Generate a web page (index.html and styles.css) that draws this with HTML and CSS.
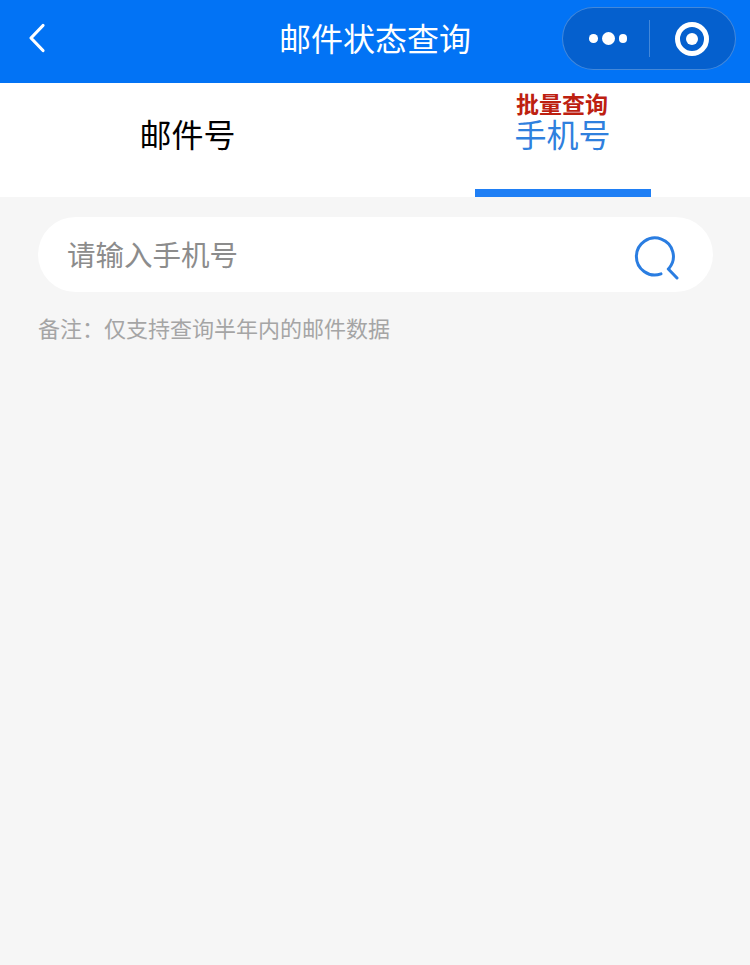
FILE: index.html
```html
<!DOCTYPE html>
<html lang="zh-CN">
<head>
  <meta charset="UTF-8">
  <meta name="viewport" content="width=device-width, initial-scale=1.0">
  <title>邮件状态查询</title>
  <link rel="stylesheet" href="styles.css">
</head>
<body>
  <header class="navbar">
    <button class="back-btn" aria-label="返回">
      <svg width="18" height="30" viewBox="0 0 18 30">
        <path d="M15 2.5 L3 15 L15 27.5" fill="none" stroke="#fff" stroke-width="3.2" stroke-linecap="round" stroke-linejoin="round"/>
      </svg>
    </button>
    <h1 class="nav-title">邮件状态查询</h1>
    <div class="capsule">
      <div class="capsule-more">
        <span class="dot"></span>
        <span class="dot dot-big"></span>
        <span class="dot"></span>
      </div>
      <div class="capsule-line"></div>
      <div class="capsule-close"><span class="ring"></span></div>
    </div>
  </header>

  <div class="tabs">
    <div class="tab">邮件号</div>
    <div class="tab tab-active">
      <span class="batch-label">批量查询</span>
      手机号
    </div>
  </div>

  <main class="content">
    <div class="search-box">
      <input class="search-input" type="text" placeholder="请输入手机号">
      <svg class="search-icon" width="46" height="46" viewBox="0 0 46 46">
        <path d="M27 39.9 A18.5 18.5 0 1 1 35 34.4" fill="none" stroke="#2a7de1" stroke-width="3" stroke-linecap="round"/>
        <path d="M34.3 35 L43 44" fill="none" stroke="#2a7de1" stroke-width="3" stroke-linecap="round"/>
      </svg>
    </div>
    <p class="note">备注&#xFF1A;仅支持查询半年内的邮件数据</p>
  </main>
</body>
</html>
```

FILE: styles.css
```css
* {
  box-sizing: border-box;
}
html, body {
  height: 100%;
}
body {
  margin: 0;
  background-color: #f6f6f6;
  font-family: "Noto Sans CJK SC", "Liberation Sans", sans-serif;
}
.navbar {
  height: 83px;
  background-color: #0273f5;
  display: flex;
  align-items: center;
  position: relative;
  padding: 0 14px 6px 28px;
}
.back-btn {
  padding: 0;
  border: none;
  background: none;
  display: flex;
  margin-bottom: 2px;
}
.nav-title {
  position: absolute;
  left: 0;
  right: 0;
  top: 14px;
  margin: 0;
  text-align: center;
  color: #fff;
  font-size: 32px;
  font-weight: 400;
  line-height: 46px;
  pointer-events: none;
}
.capsule {
  margin-left: auto;
  width: 174px;
  height: 63px;
  border: 1px solid rgba(255,255,255,0.25);
  border-radius: 32px;
  background-color: #0560ce;
  display: flex;
  align-items: center;
}
.capsule-more {
  flex: 1;
  display: flex;
  align-items: center;
  justify-content: center;
  gap: 4px;
  padding-left: 4px;
}
.dot {
  width: 8.5px;
  height: 8.5px;
  border-radius: 50%;
  background-color: #fff;
}
.dot-big {
  width: 13px;
  height: 13px;
}
.capsule-line {
  width: 1px;
  height: 37px;
  background-color: rgba(255,255,255,0.25);
}
.capsule-close {
  width: 85px;
  display: flex;
  justify-content: center;
  padding-right: 2px;
}
.ring {
  width: 34px;
  height: 34px;
  border: 5px solid #fff;
  border-radius: 50%;
  display: flex;
  align-items: center;
  justify-content: center;
}
.ring::after {
  content: "";
  width: 12px;
  height: 12px;
  border-radius: 50%;
  background-color: #fff;
}
.tabs {
  height: 114px;
  background-color: #fff;
  display: flex;
}
.tab {
  flex: 1;
  position: relative;
  text-align: center;
  font-size: 32px;
  line-height: 46px;
  padding-top: 27px;
  color: #000;
}
.tab-active {
  color: #2f80de;
}
/* underline of the selected tab */
.tab-active::after {
  content: "";
  position: absolute;
  left: 100px;
  bottom: 0;
  width: 176px;
  height: 8px;
  background-color: #1f7ff5;
}
.batch-label {
  position: absolute;
  left: -1px;
  right: 0;
  top: 4px;
  font-size: 23px;
  font-weight: 700;
  line-height: 32px;
  color: #bd2010;
}
.content {
  padding: 20px 37px 0 38px;
}
.search-box {
  height: 75px;
  border-radius: 38px;
  background-color: #fff;
  display: flex;
  align-items: center;
  padding: 0 33px 0 29px;
}
.search-input {
  flex: 1;
  min-width: 0;
  border: none;
  outline: none;
  background: none;
  padding: 0 0 2px;
  font-family: inherit;
  font-size: 28.5px;
  color: #333;
}
.search-input::placeholder {
  color: #8c8c8c;
  opacity: 1;
}
.search-icon {
  flex-shrink: 0;
  margin-top: 5px;
}
.note {
  margin: 19px 0 0;
  font-size: 22px;
  line-height: 32px;
  color: #a5a5a5;
}
```
